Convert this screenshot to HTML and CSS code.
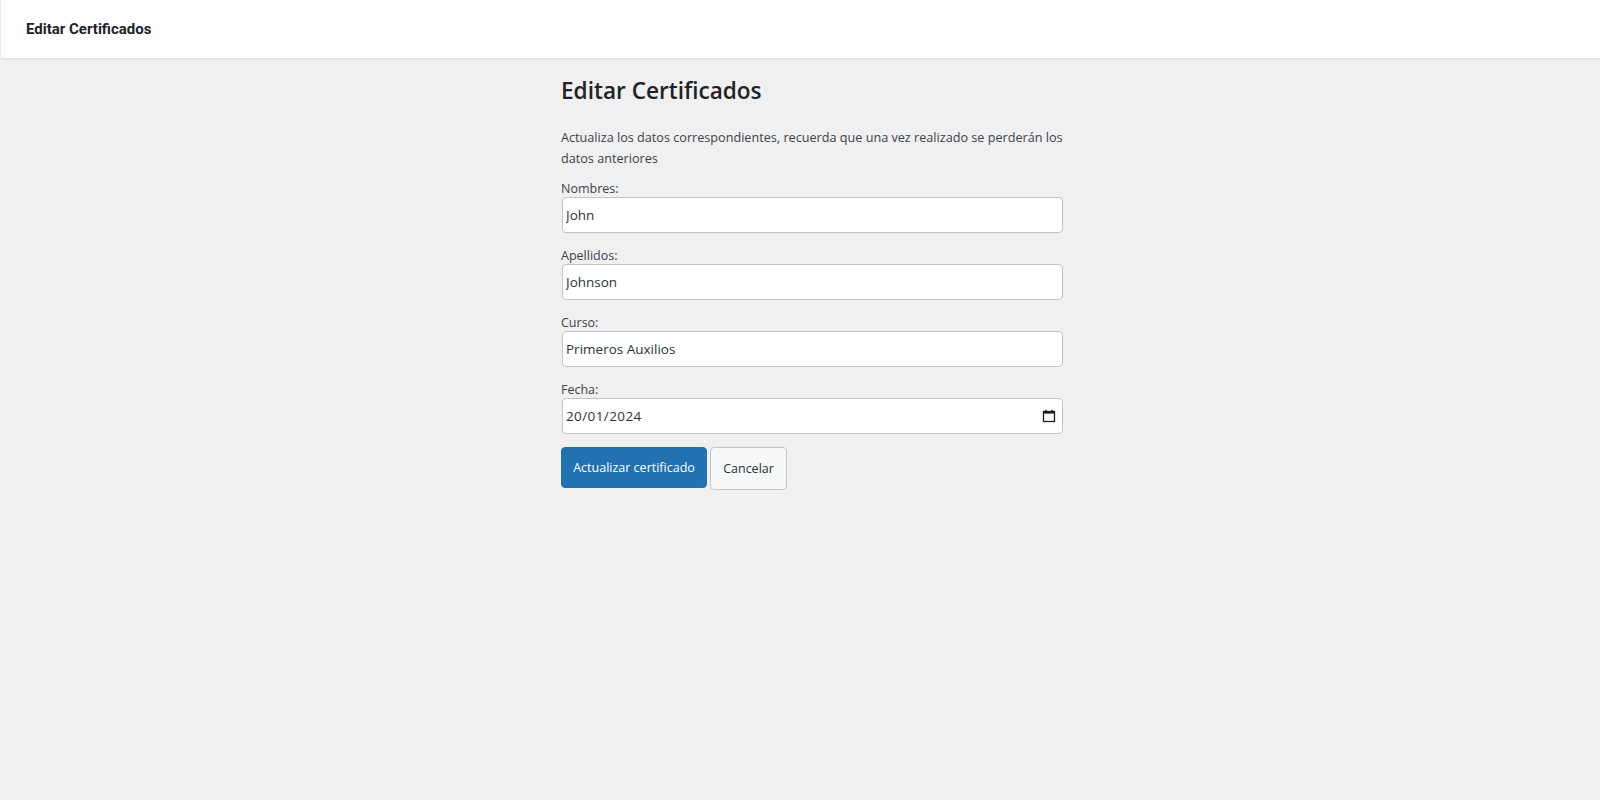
FILE: index.html
```html
<!DOCTYPE html>
<html lang="es">
<head>
<meta charset="utf-8">
<title>Editar Certificados</title>
<link rel="stylesheet" href="styles.css">
</head>
<body>
<header class="topbar">
  <span class="topbar-title">Editar Certificados</span>
</header>
<main class="page">
  <section class="form-wrap">
    <h1 class="page-title">Editar Certificados</h1>
    <p class="intro">Actualiza los datos correspondientes, recuerda que una vez realizado se perderán los datos anteriores</p>
    <form class="cert-form">
      <div class="field">
        <label class="field-label" for="nombres">Nombres:</label>
        <input class="field-input" id="nombres" type="text" value="John">
      </div>
      <div class="field">
        <label class="field-label" for="apellidos">Apellidos:</label>
        <input class="field-input" id="apellidos" type="text" value="Johnson">
      </div>
      <div class="field">
        <label class="field-label" for="curso">Curso:</label>
        <input class="field-input" id="curso" type="text" value="Primeros Auxilios">
      </div>
      <div class="field">
        <label class="field-label" for="fecha">Fecha:</label>
        <div class="date-box">
          <input class="date-input" id="fecha" type="text" value="20/01/2024">
          <svg class="cal-icon" width="14" height="14" viewBox="0 0 14 14" aria-hidden="true">
            <rect x="1.5" y="2.5" width="11" height="10" fill="none" stroke="#1d1d1d" stroke-width="1.3"/>
            <rect x="1" y="2" width="12" height="2.6" fill="#1d1d1d"/>
            <rect x="3.3" y="0.8" width="1.4" height="2" fill="#1d1d1d"/>
            <rect x="9.3" y="0.8" width="1.4" height="2" fill="#1d1d1d"/>
          </svg>
        </div>
      </div>
      <div class="actions">
        <button type="button" class="btn btn-primary">Actualizar certificado</button>
        <button type="button" class="btn btn-secondary">Cancelar</button>
      </div>
    </form>
  </section>
</main>
</body>
</html>
```

FILE: styles.css
```css
html, body {
  margin: 0;
  padding: 0;
}

body {
  background: #f0f0f0;
  font-family: "Open Sans", "Noto Sans", "Liberation Sans", sans-serif;
  color: #3c434a;
  font-size: 13px;
  min-height: 800px;
}

.topbar {
  height: 58px;
  margin-left: 1px;
  background: #ffffff;
  box-shadow: 0 1px 2px rgba(0, 0, 0, 0.08);
  display: flex;
  align-items: center;
  padding-left: 25px;
}

.topbar-title {
  font-family: Roboto, "Liberation Sans", sans-serif;
  font-weight: 700;
  font-size: 15px;
  color: #1d2327;
}

.page {
  display: flex;
  justify-content: center;
  padding-left: 24px;
}

.form-wrap {
  width: 502px;
}

.page-title {
  margin: 18px 0 0 0;
  font-size: 22.6px;
  font-weight: 600;
  line-height: 1.3;
  color: #1d2327;
}

.intro {
  margin: 22px 0 0 0;
  font-size: 12.65px;
  line-height: 21px;
  color: #3c434a;
}

.cert-form {
  margin-top: 11px;
}

.field {
  display: flex;
  flex-direction: column;
  margin-bottom: 14px;
}

.field-label {
  font-size: 12.5px;
  line-height: 17px;
  color: #3c434a;
}

.field-input,
.date-box {
  box-sizing: border-box;
  height: 36px;
  width: calc(100% - 1px);
  margin-left: 1px;
  border: 1px solid #c3c4c7;
  border-radius: 4px;
  background: #ffffff;
}

.field-input {
  padding: 0 3px;
  font-family: "Open Sans", "Noto Sans", sans-serif;
  font-size: 13.5px;
  color: #2c3338;
  outline: none;
}

.date-box {
  display: flex;
  align-items: center;
  padding: 0 6px 0 3px;
}

.date-input {
  flex: 1;
  border: 0;
  padding: 0;
  background: transparent;
  font-family: "Open Sans", "Noto Sans", sans-serif;
  font-size: 13.5px;
  letter-spacing: 0.4px;
  color: #2c3338;
  outline: none;
}

.cal-icon {
  flex: none;
}

.actions {
  display: flex;
  align-items: flex-start;
  gap: 3px;
  margin-top: -1px;
}

.btn {
  box-sizing: border-box;
  font-family: "Open Sans", "Noto Sans", sans-serif;
  font-size: 12.5px;
  cursor: pointer;
  border-radius: 4px;
}

.btn-primary {
  height: 41px;
  width: 146px;
  background: #2271b1;
  border: 1px solid #2271b1;
  color: #ffffff;
}

.btn-secondary {
  height: 43px;
  width: 77px;
  background: #f6f7f7;
  border: 1px solid #c3c4c7;
  color: #2c3338;
}
```
